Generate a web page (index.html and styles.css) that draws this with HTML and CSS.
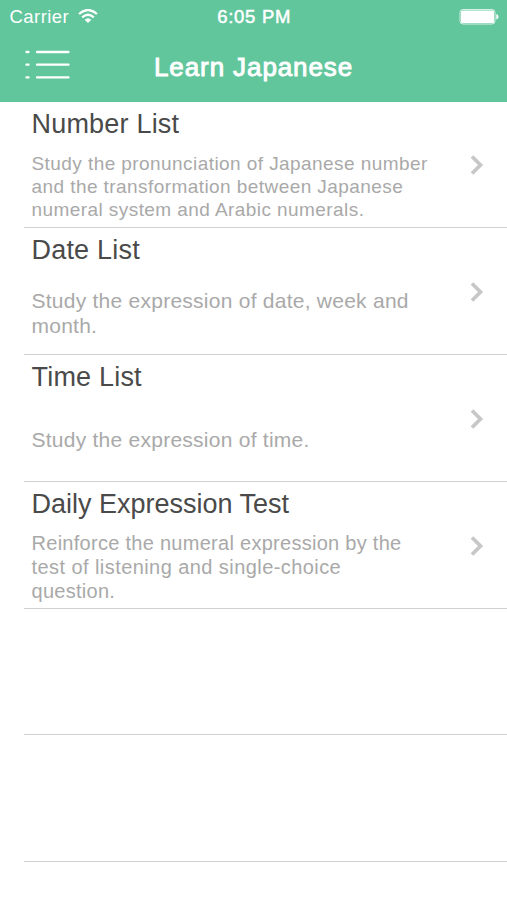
FILE: index.html
```html
<!DOCTYPE html>
<html lang="en">
<head>
<meta charset="utf-8">
<title>Learn Japanese</title>
<link rel="stylesheet" href="styles.css">
</head>
<body>
<header class="header">
  <div class="status">
    <div class="carrier"><span>Carrier</span>
      <svg class="wifi" width="20" height="14" viewBox="0 0 20 14"><g fill="none" stroke="#fff" stroke-width="2.2"><path d="M1 5Q10-3 19 5"/><path d="M4.2 8.3Q10 3.2 15.8 8.3"/></g><path d="M6.700 10.800Q10 7.800 13.300 10.800L10 14Z" fill="#fff"/></svg>
    </div>
    <span class="time">6:05 PM</span>
    <svg class="battery" width="40" height="16" viewBox="0 0 40 16"><rect x="1" y=".5" width="35" height="14.500" rx="3" fill="none" stroke="#fff" stroke-opacity=".75"/><rect x="2" y="1.500" width="33" height="12.500" rx="1.500" fill="#fff"/><path d="M37.300 5Q39.500 5.500 39.500 7.750T37.300 10.500Z" fill="#fff"/></svg>
  </div>
  <div class="nav">
    <svg class="menu" width="46" height="32" viewBox="0 0 46 32"><path d="M1.500 3H3.500M12 3H43.500M1.500 15.700H3.500M12 15.700H43.500M1.500 28.400H3.500M12 28.400H43.500" stroke="#fff" stroke-width="2.300" stroke-linecap="round"/></svg>
    <h1 class="heading">Learn Japanese</h1>
  </div>
</header>
<main class="list">
  <section class="row">
    <div class="copy"><h2 class="title">Number List</h2><p class="detail small">Study the pronunciation of Japanese number<br>and the transformation between Japanese<br>numeral system and Arabic numerals.</p></div>
    <svg class="chevron" width="14" height="20" viewBox="0 0 14 20"><path d="M2 1.500L10.500 10L2 18.500"/></svg>
  </section>
  <section class="row">
    <div class="copy"><h2 class="title">Date List</h2><p class="detail large">Study the expression of date, week and<br>month.</p></div>
    <svg class="chevron" width="14" height="20" viewBox="0 0 14 20"><path d="M2 1.500L10.500 10L2 18.500"/></svg>
  </section>
  <section class="row">
    <div class="copy"><h2 class="title">Time List</h2><p class="detail large">Study the expression of time.</p></div>
    <svg class="chevron" width="14" height="20" viewBox="0 0 14 20"><path d="M2 1.500L10.500 10L2 18.500"/></svg>
  </section>
  <section class="row">
    <div class="copy"><h2 class="title long">Daily Expression Test</h2><p class="detail medium">Reinforce the numeral expression by the<br><span class="wide">test of listening and single-choice</span><br>question.</p></div>
    <svg class="chevron" width="14" height="20" viewBox="0 0 14 20"><path d="M2 1.500L10.500 10L2 18.500"/></svg>
  </section>
  <section class="row"></section>
  <section class="row"></section>
</main>
</body>
</html>
```
FILE: styles.css
```css
* { box-sizing: border-box; }
body { margin: 0; height: 900px; overflow: hidden; background: #fff; font-family: "Liberation Sans", Arial, sans-serif; }
h1, h2, p { margin: 0; font-weight: 400; white-space: nowrap; }
svg { display: block; flex-shrink: 0; }
.header { height: 101.500px; background: #62c69d; color: #fff; }
.status { height: 33px; padding: 0 8px 0 9.500px; display: grid; grid-template-columns: 1fr 74px 1fr; align-items: center; font-size: 18.500px; letter-spacing: .45px; }
.carrier { display: flex; align-items: center; gap: 8.500px; }
.wifi { margin-top: -1px; }
.time { letter-spacing: .7px; white-space: nowrap; -webkit-text-stroke: .5px #fff; }
.battery { justify-self: end; }
.nav { display: grid; grid-template-columns: 129px 1fr; align-items: center; height: 64px; padding-left: 25px; }
.heading { padding-top: 4px; font-size: 26px; line-height: 32px; letter-spacing: .9px; -webkit-text-stroke: .9px #fff; }
.list { padding-left: 24px; }
.row { display: flex; align-items: center; justify-content: space-between; height: 126.750px; padding: 0 23px 0 7.500px; border-bottom: 1px solid #d0d0d0; }
.copy { display: flex; flex-direction: column; height: 100%; padding: 5px 0 0; }
.title { color: #4a4a4a; font-size: 27px; line-height: 34px; letter-spacing: .2px; }
.long { letter-spacing: 0; }
.detail { margin: auto 0; color: #a9a9a9; }
.small { font-size: 19px; line-height: 22.700px; letter-spacing: .43px; padding-top: 7px; }
.medium { font-size: 20px; line-height: 24px; letter-spacing: .28px; padding-top: 6px; }
.wide { letter-spacing: .43px; }
.large { font-size: 21px; line-height: 25px; letter-spacing: .25px; padding-top: 5px; }
.chevron { margin-top: 2px; fill: none; stroke: #c7c7c7; stroke-width: 3.700; }
```
